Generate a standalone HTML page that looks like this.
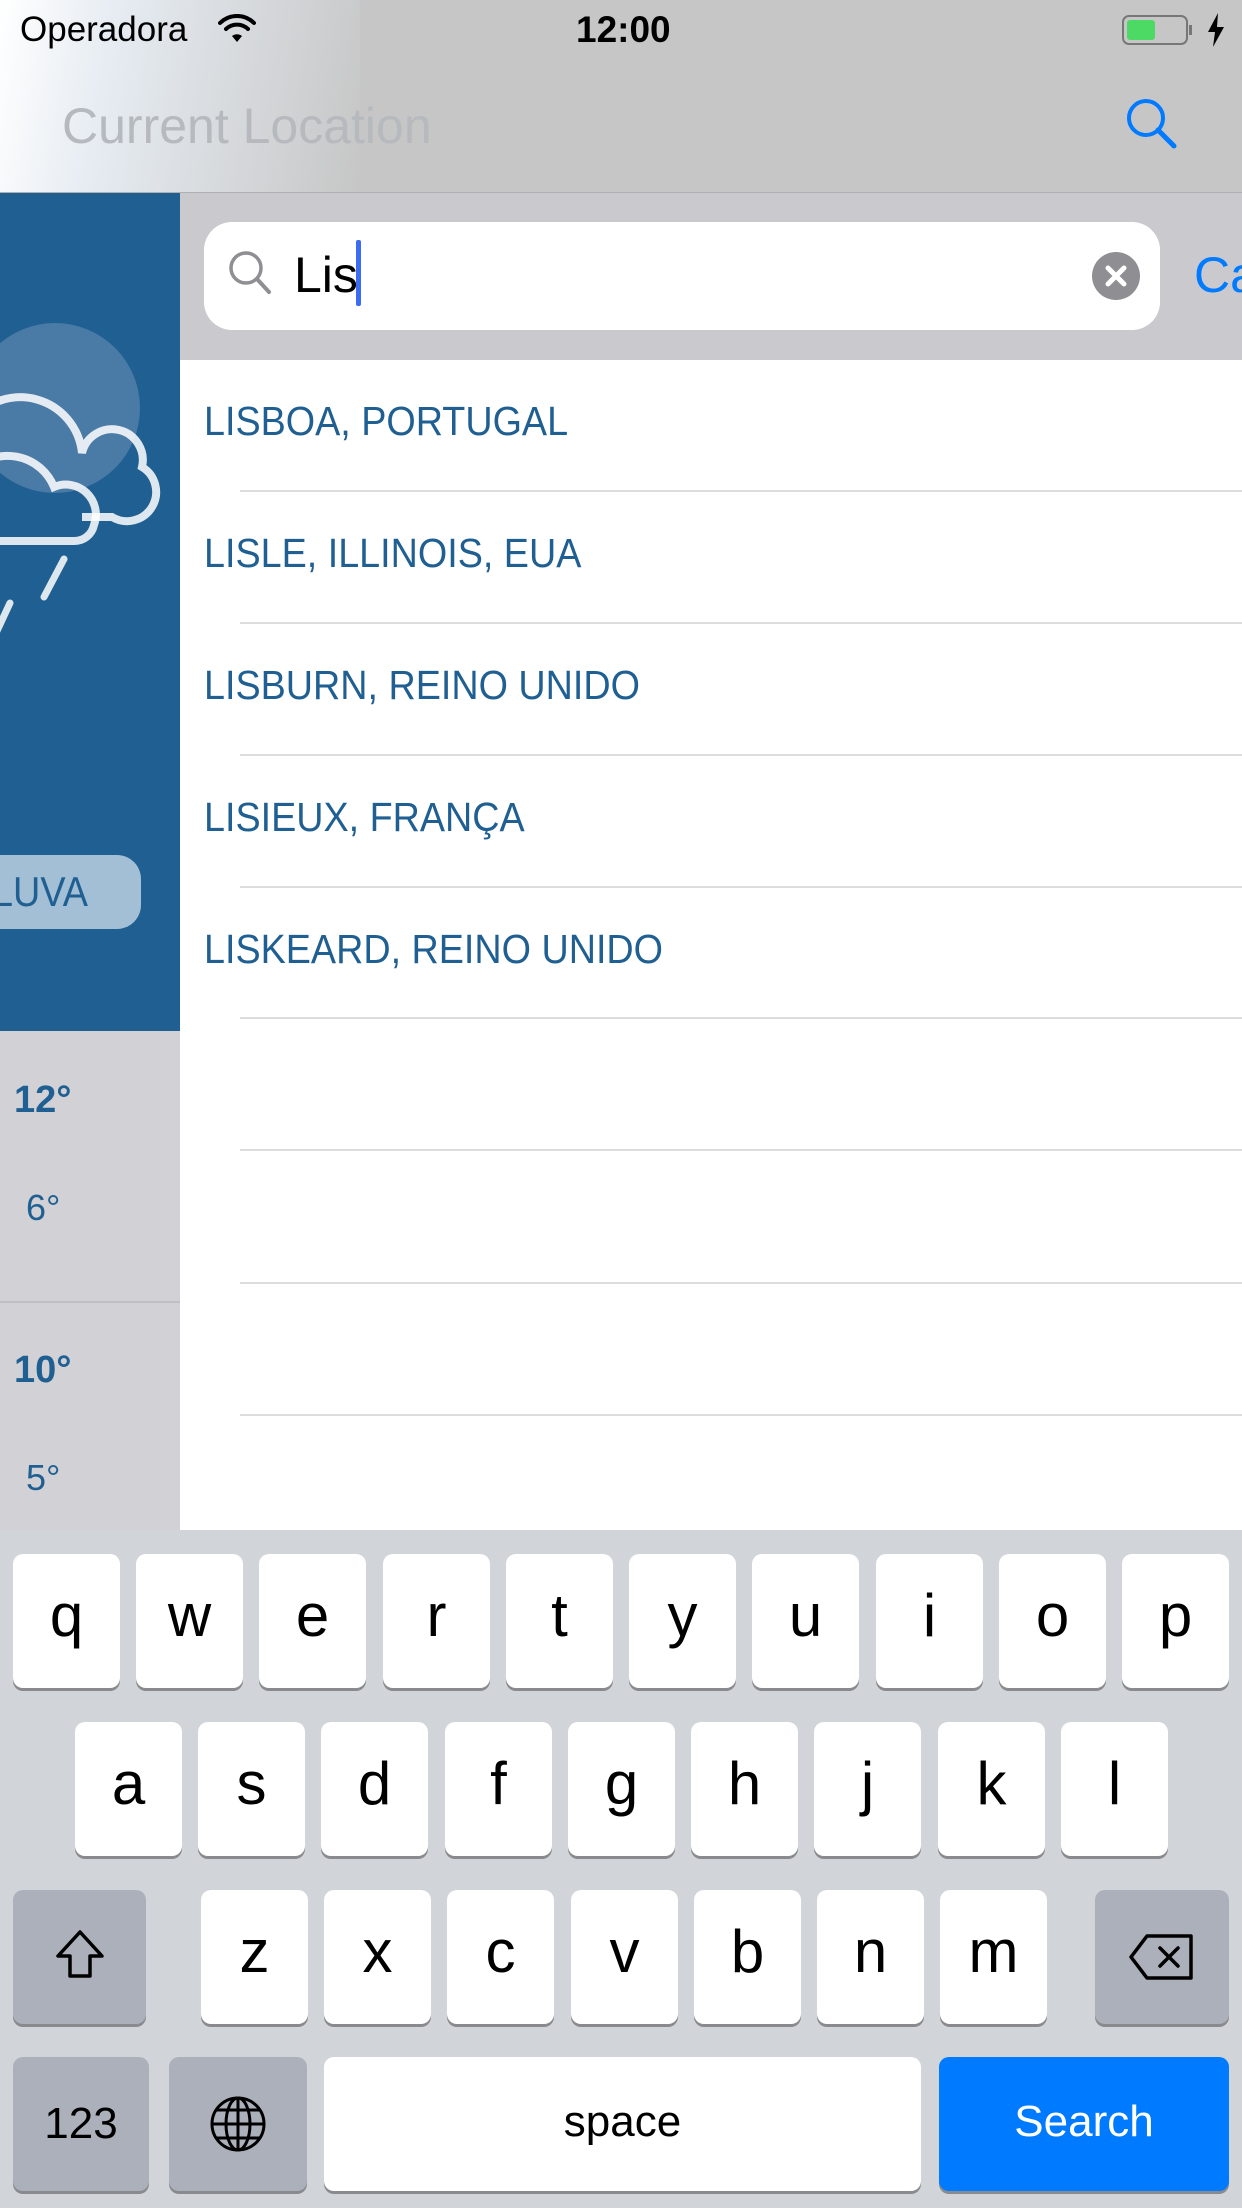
<!DOCTYPE html>
<html><head><meta charset="utf-8"><style>
*{margin:0;padding:0;box-sizing:border-box}
body{width:1242px;height:2208px;position:relative;overflow:hidden;background:#c6c6c6;font-family:"Liberation Sans",sans-serif}
.abs{position:absolute}
.row{position:absolute;left:204px;font-size:41px;color:#1f5f91;transform:scaleX(0.92);transform-origin:left center;white-space:nowrap;line-height:50px}
.sep{position:absolute;left:240px;right:0;height:2px;background:#dcdcdc}
.key{position:absolute;width:107px;height:134px;background:#fff;border-radius:10px;box-shadow:0 3px 0 #898a8d;text-align:center;font-size:60px;line-height:124px;color:#000}
.dk{background:#acb0bb}
</style></head><body>
<div class="abs" style="left:0;top:0;width:360px;height:192px;background:linear-gradient(100deg,#fff 0%,#e6ecf2 30%,rgba(198,198,198,0) 100%)"></div>
<div class="abs" style="left:20px;top:10px;font-size:35px;color:#000">Operadora</div>
<svg class="abs" style="left:218px;top:14px" width="38" height="30" viewBox="0 0 38 30"><path d="M19 28l5-6a8 8 0 0 0-10 0z" fill="#000"/><path d="M8 15a16 16 0 0 1 22 0M2 9a24 24 0 0 1 34 0" stroke="#000" stroke-width="4" fill="none" stroke-linecap="round"/></svg>
<div class="abs" style="left:576px;top:9px;font-size:37px;font-weight:bold;color:#000">12:00</div>
<div class="abs" style="left:1122px;top:15px;width:66px;height:30px;border:2px solid #777;border-radius:7px"></div>
<div class="abs" style="left:1127px;top:20px;width:28px;height:20px;background:#4cd964;border-radius:3px"></div>
<div class="abs" style="left:1189px;top:25px;width:3px;height:10px;background:#777"></div>
<svg class="abs" style="left:1206px;top:13px" width="20" height="34" viewBox="0 0 20 34"><path d="M12 0L2 19h7l-2 15 11-20h-7z" fill="#000"/></svg>
<div class="abs" style="left:62px;top:97px;font-size:50px;color:#b6b9bd">Current Location</div>
<svg class="abs" style="left:1124px;top:96px" width="60" height="56" viewBox="0 0 60 56"><circle cx="22" cy="22" r="17" stroke="#007aff" stroke-width="4" fill="none"/><path d="M34 34l16 16" stroke="#007aff" stroke-width="5" stroke-linecap="round"/></svg>
<div class="abs" style="left:0;top:192px;width:1242px;height:1px;background:#b0b0b0"></div>
<!-- left panel -->
<div class="abs" style="left:0;top:193px;width:180px;height:838px;background:#1f5f91;overflow:hidden">
<div class="abs" style="left:-30px;top:130px;width:170px;height:170px;border-radius:50%;background:#4a7aa6"></div>
<svg class="abs" style="left:0;top:150px" width="180" height="340" viewBox="0 0 180 340"><path d="M-30 80a62 62 0 0 1 112 30a30 30 0 0 1 60 14a28 28 0 0 1-30 50h-30" stroke="#fff" stroke-width="8" fill="none" opacity=".85"/><path d="M-30 130a50 50 0 0 1 84 14a30 30 0 0 1 40 38a20 20 0 0 1-20 16h-104" stroke="#fff" stroke-width="8" fill="none" opacity=".85"/><path d="M64 216l-20 38M10 260l-14 30" stroke="#fff" stroke-width="7" stroke-linecap="round" opacity=".85"/></svg>
<div class="abs" style="left:-40px;top:662px;width:181px;height:74px;border-radius:24px;background:#a3bfd6;font-size:42px;color:#1f5f91;line-height:74px;padding-left:32px"><span style="display:inline-block;transform:scaleX(.9);transform-origin:left">LUVA</span></div>
</div>
<div class="abs" style="left:0;top:1031px;width:180px;height:499px;background:#d1d1d6">
<div class="abs" style="left:14px;top:48px;font-size:38px;font-weight:bold;color:#1f5f91">12°</div>
<div class="abs" style="left:26px;top:156px;font-size:36px;color:#1f5f91">6°</div>
<div class="abs" style="left:0;top:270px;width:180px;height:2px;background:#c0c0c4"></div>
<div class="abs" style="left:14px;top:318px;font-size:38px;font-weight:bold;color:#1f5f91">10°</div>
<div class="abs" style="left:26px;top:426px;font-size:36px;color:#1f5f91">5°</div>
</div>
<!-- search bar -->
<div class="abs" style="left:180px;top:193px;width:1062px;height:167px;background:#c9c9ce"></div>
<div class="abs" style="left:204px;top:222px;width:956px;height:108px;background:#fff;border-radius:28px"></div>
<svg class="abs" style="left:226px;top:248px" width="48" height="52" viewBox="0 0 48 52"><circle cx="20" cy="20" r="15" stroke="#8e8e93" stroke-width="3.5" fill="none"/><path d="M31 31l12 13" stroke="#8e8e93" stroke-width="4" stroke-linecap="round"/></svg>
<div class="abs" style="left:294px;top:246px;font-size:50px;color:#000">Lis</div>
<div class="abs" style="left:356px;top:240px;width:5px;height:66px;background:#3b6cf2;border-radius:2px"></div>
<div class="abs" style="left:1092px;top:252px;width:48px;height:48px;border-radius:50%;background:#8e8e93"></div>
<svg class="abs" style="left:1092px;top:252px" width="48" height="48"><path d="M16 16l16 16M32 16l-16 16" stroke="#fff" stroke-width="5" stroke-linecap="round"/></svg>
<div class="abs" style="left:1194px;top:246px;font-size:50px;color:#007aff">Ca</div>
<!-- list -->
<div class="abs" style="left:180px;top:360px;width:1062px;height:1170px;background:#fff"></div>
<div class="row" style="top:396px">LISBOA, PORTUGAL</div>
<div class="sep" style="top:490px"></div>
<div class="row" style="top:528px">LISLE, ILLINOIS, EUA</div>
<div class="sep" style="top:622px"></div>
<div class="row" style="top:660px">LISBURN, REINO UNIDO</div>
<div class="sep" style="top:754px"></div>
<div class="row" style="top:792px">LISIEUX, FRANÇA</div>
<div class="sep" style="top:886px"></div>
<div class="row" style="top:924px">LISKEARD, REINO UNIDO</div>
<div class="sep" style="top:1017px"></div>
<div class="sep" style="top:1149px"></div>
<div class="sep" style="top:1282px"></div>
<div class="sep" style="top:1414px"></div>
<!-- keyboard -->
<div class="abs" style="left:0;top:1530px;width:1242px;height:678px;background:#d1d4d9"></div>
<div class="key" style="left:13px;top:1554px">q</div>
<div class="key" style="left:136px;top:1554px">w</div>
<div class="key" style="left:259px;top:1554px">e</div>
<div class="key" style="left:383px;top:1554px">r</div>
<div class="key" style="left:506px;top:1554px">t</div>
<div class="key" style="left:629px;top:1554px">y</div>
<div class="key" style="left:752px;top:1554px">u</div>
<div class="key" style="left:876px;top:1554px">i</div>
<div class="key" style="left:999px;top:1554px">o</div>
<div class="key" style="left:1122px;top:1554px">p</div>
<div class="key" style="left:75px;top:1722px">a</div>
<div class="key" style="left:198px;top:1722px">s</div>
<div class="key" style="left:321px;top:1722px">d</div>
<div class="key" style="left:445px;top:1722px">f</div>
<div class="key" style="left:568px;top:1722px">g</div>
<div class="key" style="left:691px;top:1722px">h</div>
<div class="key" style="left:814px;top:1722px">j</div>
<div class="key" style="left:938px;top:1722px">k</div>
<div class="key" style="left:1061px;top:1722px">l</div>
<div class="key dk" style="left:13px;top:1890px;width:133px"><svg width="60" height="60" viewBox="0 0 60 60" style="margin-top:36px"><path d="M30 6L8 30h12v20h20V30h12z" stroke="#000" stroke-width="3.5" fill="none" stroke-linejoin="round"/></svg></div>
<div class="key" style="left:201px;top:1890px">z</div>
<div class="key" style="left:324px;top:1890px">x</div>
<div class="key" style="left:447px;top:1890px">c</div>
<div class="key" style="left:571px;top:1890px">v</div>
<div class="key" style="left:694px;top:1890px">b</div>
<div class="key" style="left:817px;top:1890px">n</div>
<div class="key" style="left:940px;top:1890px">m</div>
<div class="key dk" style="left:1095px;top:1890px;width:134px"><svg width="70" height="50" viewBox="0 0 70 50" style="margin-top:42px"><path d="M20 4h44v42H20L4 25z" stroke="#000" stroke-width="3.5" fill="none" stroke-linejoin="round"/><path d="M33 16l18 18M51 16L33 34" stroke="#000" stroke-width="3.5" stroke-linecap="round"/></svg></div>
<div class="key dk" style="left:13px;top:2057px;width:136px;font-size:44px;line-height:134px">123</div>
<div class="key dk" style="left:169px;top:2057px;width:138px"><svg width="60" height="60" viewBox="0 0 60 60" style="margin-top:37px"><circle cx="30" cy="30" r="26" stroke="#000" stroke-width="3" fill="none"/><ellipse cx="30" cy="30" rx="12" ry="26" stroke="#000" stroke-width="3" fill="none"/><path d="M30 4v52M4 30h52M9 16h42M9 44h42" stroke="#000" stroke-width="3"/></svg></div>
<div class="key" style="left:324px;top:2057px;width:597px;font-size:44px;line-height:130px">space</div>
<div class="key" style="left:939px;top:2057px;width:290px;background:#007aff;color:#fff;font-size:44px;line-height:130px">Search</div>
</body></html>
